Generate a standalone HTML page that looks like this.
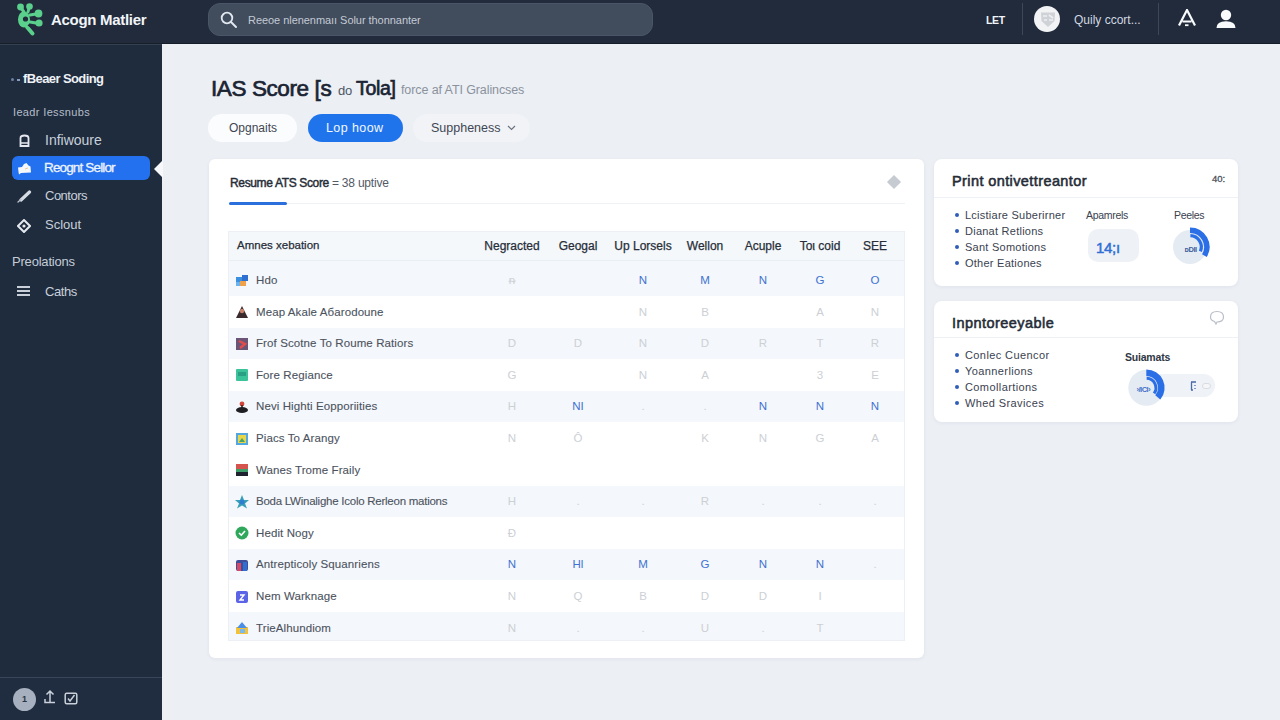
<!DOCTYPE html>
<html><head><meta charset="utf-8">
<style>
*{margin:0;padding:0;box-sizing:border-box}
html,body{width:1280px;height:720px;overflow:hidden}
body{font-family:"Liberation Sans",sans-serif;background:#eceff4;position:relative;color:#1f2937}
.abs{position:absolute}
#top{left:0;top:0;width:1280px;height:44px;background:#212b3b;border-bottom:1px solid #161e2a}
#side{left:0;top:44px;width:162px;height:676px;background:#1f2c3e;border-top:1px solid #34404f}
.t{position:absolute;white-space:nowrap;line-height:1}
</style></head><body>
<div id="top" class="abs">
  <!-- logo -->
  <svg class="abs" style="left:0;top:0" width="50" height="44" viewBox="0 0 50 44">
    <g fill="#5ad08c" stroke="#5ad08c" stroke-linecap="round" stroke-linejoin="round">
      <circle cx="20.5" cy="7" r="3.4" stroke="none"/><circle cx="29.5" cy="6.5" r="3.3" stroke="none"/>
      <circle cx="38.5" cy="13.5" r="3.9" stroke="none"/><circle cx="39" cy="23" r="3.6" stroke="none"/>
      <ellipse cx="24" cy="19.5" rx="6" ry="8" stroke="none"/>
      <path d="M27 27 L32.5 33.5" fill="none" stroke-width="4"/>
      <path d="M21 8 L24 12 M29 8 L28 12 M30 15 L36 14 M30 22 L36 23" fill="none" stroke-width="3"/>
    </g>
    <circle cx="25.5" cy="19" r="2.6" fill="#212b3b"/>
    <path d="M28 25 L31 27" stroke="#212b3b" stroke-width="1.5"/>
  </svg>
  <div class="t" style="left:51px;top:12px;font-size:15px;font-weight:bold;color:#f1f5f9;letter-spacing:-0.3px">Acogn Matlier</div>
  <!-- search -->
  <div class="abs" style="left:208px;top:3px;width:445px;height:33px;border-radius:12px;background:#414c5d;border:1px solid #4a5567"></div>
  <svg class="abs" style="left:220px;top:11px" width="18" height="18" viewBox="0 0 18 18"><circle cx="7" cy="7" r="5.3" fill="none" stroke="#e2e8f0" stroke-width="1.8"/><path d="M11 11 L16 16" stroke="#e2e8f0" stroke-width="2" stroke-linecap="round"/></svg>
  <div class="t" style="left:248px;top:15px;font-size:11px;color:#c3cad4;letter-spacing:-0.05px">Reeoe nlenenmaıı Solur thonnanter</div>
  <!-- right -->
  <div class="t" style="left:986px;top:15px;font-size:10.5px;font-weight:bold;color:#f1f5f9;letter-spacing:-0.3px">LET</div>
  <div class="abs" style="left:1022px;top:3px;width:1px;height:32px;background:#3c4858"></div>
  <div class="abs" style="left:1034px;top:6px;width:26px;height:26px;border-radius:50%;background:#f2f3f5"></div>
  <svg class="abs" style="left:1040px;top:11px" width="16" height="17" viewBox="0 0 16 17"><path d="M1 1.5 L15 1.5 L14.5 10 L8 16 L1.5 10 Z" fill="#cfd2d7"/><path d="M3 5h4M9 4l4 3M4 9h3M9 9h4" stroke="#eef0f2" stroke-width="1.6"/></svg>
  <div class="t" style="left:1074px;top:14px;font-size:12px;color:#d1d8e2">Quily ccort...</div>
  <div class="abs" style="left:1158px;top:3px;width:1px;height:32px;background:#3c4858"></div>
  <svg class="abs" style="left:1177px;top:9px" width="20" height="19" viewBox="0 0 20 19"><path d="M2 16.5 L10 1 L18 16.5 M5.5 12.5 L14.5 12.5" fill="none" stroke="#f8fafc" stroke-width="2.2"/><path d="M8 16.2 L11.5 16.2" stroke="#f8fafc" stroke-width="1.8"/></svg>
  <svg class="abs" style="left:1215px;top:9px" width="22" height="20" viewBox="0 0 22 20"><circle cx="11" cy="6" r="5.2" fill="#f8fafc"/><path d="M1.5 19 Q1.5 12.2 11 12.2 Q20.5 12.2 20.5 19 Z" fill="#f8fafc"/></svg>
</div>

<div id="side" class="abs">
  <div class="abs" style="left:11px;top:33px;width:3px;height:3px;border-radius:50%;background:#6b7fa8"></div>
  <div class="abs" style="left:17px;top:34px;width:3px;height:2px;background:#8a9bbd"></div>
  <div class="t" style="left:23px;top:27px;font-size:13px;font-weight:bold;color:#eef2f7;letter-spacing:-0.6px">fBeaer Soding</div>
  <div class="t" style="left:13px;top:62px;font-size:11px;color:#b5bdc9;letter-spacing:0.35px">Ieadr Iessnubs</div>
  <!-- item 1 -->
  <svg class="abs" style="left:18px;top:89px" width="13" height="13" viewBox="0 0 13 13"><path d="M2.5 12 L2.5 4 Q2.5 1.5 6.5 1.5 Q10.5 1.5 10.5 4 L10.5 12 Z" fill="none" stroke="#e5e9ef" stroke-width="1.8"/><path d="M3 9h7" stroke="#e5e9ef" stroke-width="1.5"/></svg>
  <div class="t" style="left:45px;top:88px;font-size:14px;color:#c8d0da">Infiwoure</div>
  <!-- active -->
  <div class="abs" style="left:12px;top:111px;width:138px;height:24px;border-radius:6px;background:#2371ee"></div>
  <svg class="abs" style="left:17px;top:117px" width="15" height="13" viewBox="0 0 15 13"><path d="M1 5.5 L5 5 L7 2 L9.5 1 L11.5 3.5 L13.5 4.5 L14 10.5 L4 11 L2 12.5 L1.5 10 Z" fill="#f4f7fb"/><path d="M8 7 L11 6" stroke="#f3c98a" stroke-width="1"/></svg>
  <div class="t" style="left:44px;top:116px;font-size:13.5px;color:#eef4ff;letter-spacing:-0.85px;-webkit-text-stroke:0.3px #eef4ff">Reognt Sellor</div>
  <svg class="abs" style="left:153px;top:115px" width="10" height="18" viewBox="0 0 10 18"><path d="M10 0 L1 9 L10 18 Z" fill="#f6f8fa"/></svg>
  <!-- item 3 -->
  <svg class="abs" style="left:17px;top:145px" width="15" height="13" viewBox="0 0 15 13"><path d="M4 10 L12.5 2" stroke="#d5dbe3" stroke-width="3.2" stroke-linecap="round"/><path d="M1 12 L4 9.5" stroke="#b9c1cc" stroke-width="1.4" stroke-linecap="round"/></svg>
  <div class="t" style="left:45px;top:144px;font-size:13px;color:#c8d0da;letter-spacing:-0.5px">Contors</div>
  <!-- item 4 -->
  <svg class="abs" style="left:17px;top:174px" width="14" height="14" viewBox="0 0 14 14"><path d="M7 1 L13 7 L7 13 L1 7 Z" fill="none" stroke="#e5e9ef" stroke-width="2"/><circle cx="7" cy="7" r="1.6" fill="#e5e9ef"/></svg>
  <div class="t" style="left:45px;top:173px;font-size:13px;color:#c8d0da">Sclout</div>
  <div class="t" style="left:12px;top:210px;font-size:13px;color:#c4ccd6;letter-spacing:-0.2px">Preolations</div>
  <svg class="abs" style="left:16px;top:240px" width="15" height="12" viewBox="0 0 15 12"><path d="M1 2h13M1 6h13M1 10h13" stroke="#c9d0da" stroke-width="1.8"/></svg>
  <div class="t" style="left:45px;top:240px;font-size:13px;color:#c8d0da;letter-spacing:-0.4px">Caths</div>
  <!-- bottom -->
  <div class="abs" style="left:0;top:632px;width:162px;height:44px;background:#202d40;border-top:1px solid #38455a"></div>
  <div class="abs" style="left:13px;top:643px;width:23px;height:23px;border-radius:50%;background:#a6b0be"></div>
  <div class="t" style="left:22px;top:650px;font-size:9px;color:#2c3443;font-weight:bold">1</div>
  <svg class="abs" style="left:43px;top:644px" width="14" height="15" viewBox="0 0 14 15"><path d="M7 13 L7 2 M3.5 5.5 L7 2 L10.5 5.5 M2 10 L2 13.5 L12 13.5" fill="none" stroke="#c9d0da" stroke-width="1.5"/></svg>
  <svg class="abs" style="left:64px;top:647px" width="14" height="13" viewBox="0 0 14 13"><rect x="1.2" y="1.2" width="11.6" height="10.6" rx="1.5" fill="none" stroke="#c9d0da" stroke-width="1.5"/><path d="M4 6.5 L6 9 L10.5 3" fill="none" stroke="#c9d0da" stroke-width="1.5"/></svg>
</div>

<div id="main">
<div class="t" style="left:211px;top:78px;font-size:22.5px;font-weight:normal;color:#1b2433;letter-spacing:-0.4px;-webkit-text-stroke:0.7px #1b2433">IAS Score [s</div>
<div class="t" style="left:338px;top:84px;font-size:13px;color:#4b5563;letter-spacing:-0.3px">do</div>
<div class="t" style="left:356px;top:79px;font-size:19.5px;font-weight:normal;color:#1b2433;letter-spacing:-0.3px;-webkit-text-stroke:0.7px #1b2433">Tola]</div>
<div class="t" style="left:401px;top:84px;font-size:12.5px;color:#8a929e;letter-spacing:-0.1px">force af ATI Gralincses</div>
<div class="abs" style="left:208px;top:114px;width:89px;height:28px;border-radius:14px;background:#fbfcfd"></div>
<div class="t" style="left:229px;top:122px;font-size:12px;color:#3f4753">Opgnaits</div>
<div class="abs" style="left:308px;top:114px;width:95px;height:28px;border-radius:14px;background:#1f74ec"></div>
<div class="t" style="left:326px;top:122px;font-size:12.5px;color:#f4f8ff;letter-spacing:0.4px">Lop hoow</div>
<div class="abs" style="left:413px;top:114px;width:117px;height:28px;border-radius:14px;background:#f1f3f6"></div>
<div class="t" style="left:431px;top:122px;font-size:12.5px;color:#3f4753;letter-spacing:0px">Suppheness</div>
<svg class="abs" style="left:507px;top:125px" width="9" height="6" viewBox="0 0 9 6"><path d="M1 1 L4.5 4.5 L8 1" fill="none" stroke="#6b7280" stroke-width="1.2"/></svg>
<div class="abs" style="left:209px;top:159px;width:715px;height:499px;border-radius:6px;background:#ffffff;box-shadow:0 1px 4px rgba(30,40,60,0.06)"></div>
<div class="t" style="left:230px;top:177px;font-size:12px;font-weight:normal;color:#262d38;letter-spacing:-0.35px;-webkit-text-stroke:0.45px #262d38">Resume ATS Score <span style="-webkit-text-stroke:0;color:#525a66;letter-spacing:-0.2px">= 38 uptive</span></div>
<div class="abs" style="left:229px;top:203px;width:676px;height:1px;background:#eef1f5"></div>
<div class="abs" style="left:229px;top:202px;width:58px;height:2.5px;border-radius:2px;background:#2b6fdc"></div>
<div class="abs" style="left:889px;top:177px;width:10px;height:10px;background:#c6cbd2;transform:rotate(45deg)"></div>
<div class="abs" style="left:228px;top:231px;width:677px;height:410px;border:1px solid #eceff4;background:#fff"></div>
<div class="abs" style="left:229px;top:232px;width:675px;height:29px;background:#f5f8fb;border-bottom:1px solid #e9eef4"></div>
<div class="t" style="left:237px;top:240px;font-size:11.5px;color:#272e39;letter-spacing:0px;-webkit-text-stroke:0.25px #272e39">Amnes xebation</div>
<div class="t" style="left:452px;width:120px;text-align:center;top:240px;font-size:12px;color:#272e39;letter-spacing:0px;-webkit-text-stroke:0.25px #272e39">Negracted</div>
<div class="t" style="left:518px;width:120px;text-align:center;top:240px;font-size:12px;color:#272e39;letter-spacing:0px;-webkit-text-stroke:0.25px #272e39">Geogal</div>
<div class="t" style="left:583px;width:120px;text-align:center;top:240px;font-size:12px;color:#272e39;letter-spacing:0px;-webkit-text-stroke:0.25px #272e39">Up Lorsels</div>
<div class="t" style="left:645px;width:120px;text-align:center;top:240px;font-size:12px;color:#272e39;letter-spacing:0px;-webkit-text-stroke:0.25px #272e39">Wellon</div>
<div class="t" style="left:703px;width:120px;text-align:center;top:240px;font-size:12px;color:#272e39;letter-spacing:0px;-webkit-text-stroke:0.25px #272e39">Acuple</div>
<div class="t" style="left:760px;width:120px;text-align:center;top:240px;font-size:12px;color:#272e39;letter-spacing:0px;-webkit-text-stroke:0.25px #272e39">Toι coid</div>
<div class="t" style="left:815px;width:120px;text-align:center;top:240px;font-size:12px;color:#272e39;letter-spacing:0px;-webkit-text-stroke:0.25px #272e39">SEE</div>
<div class="abs" style="left:229px;top:261.0px;width:675px;height:35.1px;background:#f4f7fb"></div>
<svg class="abs" style="left:235px;top:273.5px" width="14" height="14" viewBox="0 0 14 14"><rect x="1" y="3" width="6" height="5" fill="#3b8fe0"/><rect x="7" y="1" width="6" height="6" fill="#2f6fcf"/><rect x="5" y="7" width="6" height="5" fill="#f0a24a"/><rect x="1" y="8" width="4" height="4" fill="#6bb2f0"/></svg>
<div class="t" style="left:256px;top:275.0px;font-size:11.5px;color:#4c535e;letter-spacing:0.1px;-webkit-text-stroke:0.1px #4c535e">Hdo</div>
<div class="t" style="left:492px;width:40px;text-align:center;top:275.0px;font-size:11.5px;color:#ccd0d5">ᵰ</div>
<div class="t" style="left:623px;width:40px;text-align:center;top:275.0px;font-size:11.5px;color:#3f72d2">N</div>
<div class="t" style="left:685px;width:40px;text-align:center;top:275.0px;font-size:11.5px;color:#3f72d2">M</div>
<div class="t" style="left:743px;width:40px;text-align:center;top:275.0px;font-size:11.5px;color:#3f72d2">N</div>
<div class="t" style="left:800px;width:40px;text-align:center;top:275.0px;font-size:11.5px;color:#3f72d2">G</div>
<div class="t" style="left:855px;width:40px;text-align:center;top:275.0px;font-size:11.5px;color:#3f72d2">O</div>
<svg class="abs" style="left:235px;top:305.1px" width="14" height="14" viewBox="0 0 14 14"><path d="M7 1 L13 13 L1 13 Z" fill="#3a2a2e"/><circle cx="7" cy="6" r="2.2" fill="#c9826b"/></svg>
<div class="t" style="left:256px;top:306.6px;font-size:11.5px;color:#4c535e;letter-spacing:0.1px;-webkit-text-stroke:0.1px #4c535e">Meap Akale Aбarodoune</div>
<div class="t" style="left:623px;width:40px;text-align:center;top:306.6px;font-size:11.5px;color:#ccd0d5">N</div>
<div class="t" style="left:685px;width:40px;text-align:center;top:306.6px;font-size:11.5px;color:#ccd0d5">B</div>
<div class="t" style="left:800px;width:40px;text-align:center;top:306.6px;font-size:11.5px;color:#ccd0d5">A</div>
<div class="t" style="left:855px;width:40px;text-align:center;top:306.6px;font-size:11.5px;color:#ccd0d5">N</div>
<div class="abs" style="left:229px;top:327.7px;width:675px;height:31.6px;background:#f4f7fb"></div>
<svg class="abs" style="left:235px;top:336.7px" width="14" height="14" viewBox="0 0 14 14"><rect x="1" y="1" width="12" height="12" fill="#6b5576"/><path d="M4 4 L10 7 L5 11" stroke="#e24b4b" stroke-width="2.5" fill="none"/></svg>
<div class="t" style="left:256px;top:338.2px;font-size:11.5px;color:#4c535e;letter-spacing:0.1px;-webkit-text-stroke:0.1px #4c535e">Frof Scotne To Roume Ratiors</div>
<div class="t" style="left:492px;width:40px;text-align:center;top:338.2px;font-size:11.5px;color:#ccd0d5">D</div>
<div class="t" style="left:558px;width:40px;text-align:center;top:338.2px;font-size:11.5px;color:#ccd0d5">D</div>
<div class="t" style="left:623px;width:40px;text-align:center;top:338.2px;font-size:11.5px;color:#ccd0d5">N</div>
<div class="t" style="left:685px;width:40px;text-align:center;top:338.2px;font-size:11.5px;color:#ccd0d5">D</div>
<div class="t" style="left:743px;width:40px;text-align:center;top:338.2px;font-size:11.5px;color:#ccd0d5">R</div>
<div class="t" style="left:800px;width:40px;text-align:center;top:338.2px;font-size:11.5px;color:#ccd0d5">T</div>
<div class="t" style="left:855px;width:40px;text-align:center;top:338.2px;font-size:11.5px;color:#ccd0d5">R</div>
<svg class="abs" style="left:235px;top:368.3px" width="14" height="14" viewBox="0 0 14 14"><rect x="1" y="1" width="12" height="12" rx="1" fill="#3cc39a"/><rect x="3" y="4" width="8" height="4" fill="#2a9f83"/></svg>
<div class="t" style="left:256px;top:369.8px;font-size:11.5px;color:#4c535e;letter-spacing:0.1px;-webkit-text-stroke:0.1px #4c535e">Fore Regiance</div>
<div class="t" style="left:492px;width:40px;text-align:center;top:369.8px;font-size:11.5px;color:#ccd0d5">G</div>
<div class="t" style="left:623px;width:40px;text-align:center;top:369.8px;font-size:11.5px;color:#ccd0d5">N</div>
<div class="t" style="left:685px;width:40px;text-align:center;top:369.8px;font-size:11.5px;color:#ccd0d5">A</div>
<div class="t" style="left:800px;width:40px;text-align:center;top:369.8px;font-size:11.5px;color:#ccd0d5">3</div>
<div class="t" style="left:855px;width:40px;text-align:center;top:369.8px;font-size:11.5px;color:#ccd0d5">E</div>
<div class="abs" style="left:229px;top:390.9px;width:675px;height:31.6px;background:#f4f7fb"></div>
<svg class="abs" style="left:235px;top:399.9px" width="14" height="14" viewBox="0 0 14 14"><ellipse cx="7" cy="10" rx="6" ry="3" fill="#1f1f23"/><circle cx="7" cy="4" r="2.4" fill="#d2463c"/><rect x="6.3" y="5" width="1.4" height="4" fill="#1f1f23"/></svg>
<div class="t" style="left:256px;top:401.4px;font-size:11.5px;color:#4c535e;letter-spacing:0.1px;-webkit-text-stroke:0.1px #4c535e">Nevi Highti Eopporiities</div>
<div class="t" style="left:492px;width:40px;text-align:center;top:401.4px;font-size:11.5px;color:#ccd0d5">H</div>
<div class="t" style="left:558px;width:40px;text-align:center;top:401.4px;font-size:11.5px;color:#3f72d2">NI</div>
<div class="t" style="left:623px;width:40px;text-align:center;top:401.4px;font-size:11.5px;color:#ccd0d5">.</div>
<div class="t" style="left:685px;width:40px;text-align:center;top:401.4px;font-size:11.5px;color:#ccd0d5">.</div>
<div class="t" style="left:743px;width:40px;text-align:center;top:401.4px;font-size:11.5px;color:#3f72d2">N</div>
<div class="t" style="left:800px;width:40px;text-align:center;top:401.4px;font-size:11.5px;color:#3f72d2">N</div>
<div class="t" style="left:855px;width:40px;text-align:center;top:401.4px;font-size:11.5px;color:#3f72d2">N</div>
<svg class="abs" style="left:235px;top:431.5px" width="14" height="14" viewBox="0 0 14 14"><rect x="1" y="1" width="12" height="12" fill="#52a7e0"/><rect x="3" y="3" width="8" height="8" fill="#e8d64a"/><path d="M4 10 L7 6 L10 10Z" fill="#46a36b"/></svg>
<div class="t" style="left:256px;top:433.0px;font-size:11.5px;color:#4c535e;letter-spacing:0.1px;-webkit-text-stroke:0.1px #4c535e">Piacs To Arangy</div>
<div class="t" style="left:492px;width:40px;text-align:center;top:433.0px;font-size:11.5px;color:#ccd0d5">N</div>
<div class="t" style="left:558px;width:40px;text-align:center;top:433.0px;font-size:11.5px;color:#ccd0d5">Ô</div>
<div class="t" style="left:685px;width:40px;text-align:center;top:433.0px;font-size:11.5px;color:#ccd0d5">K</div>
<div class="t" style="left:743px;width:40px;text-align:center;top:433.0px;font-size:11.5px;color:#ccd0d5">N</div>
<div class="t" style="left:800px;width:40px;text-align:center;top:433.0px;font-size:11.5px;color:#ccd0d5">G</div>
<div class="t" style="left:855px;width:40px;text-align:center;top:433.0px;font-size:11.5px;color:#ccd0d5">A</div>
<svg class="abs" style="left:235px;top:463.1px" width="14" height="14" viewBox="0 0 14 14"><rect x="1" y="1" width="12" height="5" fill="#d6544e"/><rect x="1" y="6" width="12" height="3" fill="#3d9e6a"/><rect x="1" y="9" width="12" height="4" fill="#1f2330"/></svg>
<div class="t" style="left:256px;top:464.6px;font-size:11.5px;color:#4c535e;letter-spacing:0.1px;-webkit-text-stroke:0.1px #4c535e">Wanes Trome Fraily</div>
<div class="abs" style="left:229px;top:485.7px;width:675px;height:31.6px;background:#f4f7fb"></div>
<svg class="abs" style="left:235px;top:494.7px" width="14" height="14" viewBox="0 0 14 14"><path d="M7 0 L9 5 L14 5 L10 8.5 L12 13.5 L7 10.5 L2 13.5 L4 8.5 L0 5 L5 5Z" fill="#3aa0b8"/><circle cx="7" cy="7" r="2.5" fill="#2f7fd0"/></svg>
<div class="t" style="left:256px;top:496.2px;font-size:11.5px;color:#4c535e;letter-spacing:-0.25px;-webkit-text-stroke:0.1px #4c535e">Boda LWinalighe Icolo Rerleon mations</div>
<div class="t" style="left:492px;width:40px;text-align:center;top:496.2px;font-size:11.5px;color:#ccd0d5">H</div>
<div class="t" style="left:558px;width:40px;text-align:center;top:496.2px;font-size:11.5px;color:#ccd0d5">.</div>
<div class="t" style="left:623px;width:40px;text-align:center;top:496.2px;font-size:11.5px;color:#ccd0d5">.</div>
<div class="t" style="left:685px;width:40px;text-align:center;top:496.2px;font-size:11.5px;color:#ccd0d5">R</div>
<div class="t" style="left:743px;width:40px;text-align:center;top:496.2px;font-size:11.5px;color:#ccd0d5">.</div>
<div class="t" style="left:800px;width:40px;text-align:center;top:496.2px;font-size:11.5px;color:#ccd0d5">.</div>
<div class="t" style="left:855px;width:40px;text-align:center;top:496.2px;font-size:11.5px;color:#ccd0d5">.</div>
<svg class="abs" style="left:235px;top:526.3px" width="14" height="14" viewBox="0 0 14 14"><circle cx="7" cy="7" r="6.5" fill="#2fa85c"/><path d="M4 7 L6.3 9.2 L10 5" stroke="#fff" stroke-width="1.6" fill="none"/></svg>
<div class="t" style="left:256px;top:527.8px;font-size:11.5px;color:#4c535e;letter-spacing:0.1px;-webkit-text-stroke:0.1px #4c535e">Hedit Nogy</div>
<div class="t" style="left:492px;width:40px;text-align:center;top:527.8px;font-size:11.5px;color:#ccd0d5">Ð</div>
<div class="abs" style="left:229px;top:548.9px;width:675px;height:31.6px;background:#f4f7fb"></div>
<svg class="abs" style="left:235px;top:557.9px" width="14" height="14" viewBox="0 0 14 14"><rect x="1" y="2" width="12" height="11" rx="2" fill="#3d4f9a"/><rect x="2" y="5" width="4" height="8" fill="#d84a63"/><rect x="8" y="4" width="4" height="9" fill="#2f6fd0"/></svg>
<div class="t" style="left:256px;top:559.4px;font-size:11.5px;color:#4c535e;letter-spacing:0.1px;-webkit-text-stroke:0.1px #4c535e">Antrepticoly Squanriens</div>
<div class="t" style="left:492px;width:40px;text-align:center;top:559.4px;font-size:11.5px;color:#3f72d2">N</div>
<div class="t" style="left:558px;width:40px;text-align:center;top:559.4px;font-size:11.5px;color:#3f72d2">Hl</div>
<div class="t" style="left:623px;width:40px;text-align:center;top:559.4px;font-size:11.5px;color:#3f72d2">M</div>
<div class="t" style="left:685px;width:40px;text-align:center;top:559.4px;font-size:11.5px;color:#3f72d2">G</div>
<div class="t" style="left:743px;width:40px;text-align:center;top:559.4px;font-size:11.5px;color:#3f72d2">N</div>
<div class="t" style="left:800px;width:40px;text-align:center;top:559.4px;font-size:11.5px;color:#3f72d2">N</div>
<div class="t" style="left:855px;width:40px;text-align:center;top:559.4px;font-size:11.5px;color:#ccd0d5">.</div>
<svg class="abs" style="left:235px;top:589.5px" width="14" height="14" viewBox="0 0 14 14"><rect x="1" y="1" width="12" height="12" rx="2" fill="#5b63e6"/><path d="M5 5h4L5 10h4" stroke="#fff" stroke-width="1.4" fill="none"/></svg>
<div class="t" style="left:256px;top:591.0px;font-size:11.5px;color:#4c535e;letter-spacing:0.1px;-webkit-text-stroke:0.1px #4c535e">Nem Warknage</div>
<div class="t" style="left:492px;width:40px;text-align:center;top:591.0px;font-size:11.5px;color:#ccd0d5">N</div>
<div class="t" style="left:558px;width:40px;text-align:center;top:591.0px;font-size:11.5px;color:#ccd0d5">Q</div>
<div class="t" style="left:623px;width:40px;text-align:center;top:591.0px;font-size:11.5px;color:#ccd0d5">B</div>
<div class="t" style="left:685px;width:40px;text-align:center;top:591.0px;font-size:11.5px;color:#ccd0d5">D</div>
<div class="t" style="left:743px;width:40px;text-align:center;top:591.0px;font-size:11.5px;color:#ccd0d5">D</div>
<div class="t" style="left:800px;width:40px;text-align:center;top:591.0px;font-size:11.5px;color:#ccd0d5">I</div>
<div class="abs" style="left:229px;top:612.1px;width:675px;height:27.9px;background:#f4f7fb"></div>
<svg class="abs" style="left:235px;top:621.1px" width="14" height="14" viewBox="0 0 14 14"><rect x="1" y="6" width="12" height="7" fill="#f2c23a"/><path d="M2 7 L7 1 L12 7Z" fill="#4a8ee8"/><rect x="5" y="8" width="5" height="4" fill="#7ab8f0"/></svg>
<div class="t" style="left:256px;top:622.6px;font-size:11.5px;color:#4c535e;letter-spacing:0.1px;-webkit-text-stroke:0.1px #4c535e">TrieAlhundiom</div>
<div class="t" style="left:492px;width:40px;text-align:center;top:622.6px;font-size:11.5px;color:#ccd0d5">N</div>
<div class="t" style="left:558px;width:40px;text-align:center;top:622.6px;font-size:11.5px;color:#ccd0d5">.</div>
<div class="t" style="left:623px;width:40px;text-align:center;top:622.6px;font-size:11.5px;color:#ccd0d5">.</div>
<div class="t" style="left:685px;width:40px;text-align:center;top:622.6px;font-size:11.5px;color:#ccd0d5">U</div>
<div class="t" style="left:743px;width:40px;text-align:center;top:622.6px;font-size:11.5px;color:#ccd0d5">.</div>
<div class="t" style="left:800px;width:40px;text-align:center;top:622.6px;font-size:11.5px;color:#ccd0d5">T</div>
<div class="abs" style="left:934px;top:159px;width:304px;height:127px;border-radius:8px;background:#fff;box-shadow:0 1px 4px rgba(30,40,60,0.06)"></div>
<div class="t" style="left:952px;top:174px;font-size:14.5px;font-weight:normal;color:#252c37;letter-spacing:0.4px;-webkit-text-stroke:0.55px #252c37">Print ontivettreantor</div>
<div class="t" style="left:1212px;top:174px;font-size:9.5px;color:#4b525c;-webkit-text-stroke:0.3px #4b525c">40:</div>
<div class="abs" style="left:934px;top:197px;width:304px;height:1px;background:#eef1f5"></div>
<div class="abs" style="left:955px;top:213px;width:4px;height:4px;border-radius:50%;background:#2f5fb8"></div>
<div class="t" style="left:965px;top:210px;font-size:11px;color:#3a4250;letter-spacing:0.25px">Lcistiare Suberirner</div>
<div class="abs" style="left:955px;top:229px;width:4px;height:4px;border-radius:50%;background:#2f5fb8"></div>
<div class="t" style="left:965px;top:226px;font-size:11px;color:#3a4250;letter-spacing:0.25px">Dianat Retlions</div>
<div class="abs" style="left:955px;top:245px;width:4px;height:4px;border-radius:50%;background:#2f5fb8"></div>
<div class="t" style="left:965px;top:242px;font-size:11px;color:#3a4250;letter-spacing:0.25px">Sant Somotions</div>
<div class="abs" style="left:955px;top:261px;width:4px;height:4px;border-radius:50%;background:#2f5fb8"></div>
<div class="t" style="left:965px;top:258px;font-size:11px;color:#3a4250;letter-spacing:0.25px">Other Eationes</div>
<div class="t" style="left:1086px;top:210px;font-size:10.5px;color:#3a4250;letter-spacing:-0.3px">Apamrels</div>
<div class="abs" style="left:1088px;top:229px;width:51px;height:33px;border-radius:10px;background:#eef2f7"></div>
<div class="t" style="left:1096px;top:240px;font-size:15px;font-weight:normal;color:#2f6fd6;letter-spacing:-0.3px;-webkit-text-stroke:0.5px #2f6fd6">14;ı</div>
<div class="t" style="left:1174px;top:210px;font-size:10.5px;color:#3a4250;letter-spacing:-0.3px">Peeles</div>
<svg class="abs" style="left:1160px;top:220px" width="60" height="55" viewBox="0 0 60 55"><circle cx="30" cy="27" r="17" fill="#e5ebf3"/><path d="M30.00 10.20 A16.8 16.8 0 0 1 44.40 35.65" fill="none" stroke="#2b6fe6" stroke-width="5.5"/><path d="M30.39 15.71 A11.3 11.3 0 0 1 40.40 31.42" fill="none" stroke="#2b6fe6" stroke-width="3.2"/><text x="24.5" y="32" font-size="7.5" font-weight="bold" fill="#40609e" font-family="Liberation Sans" letter-spacing="-0.4">ᴅDll</text></svg>
<div class="abs" style="left:934px;top:301px;width:304px;height:121px;border-radius:8px;background:#fff;box-shadow:0 1px 4px rgba(30,40,60,0.06)"></div>
<div class="t" style="left:952px;top:316px;font-size:14.5px;font-weight:normal;color:#252c37;letter-spacing:0.45px;-webkit-text-stroke:0.55px #252c37">Inpntoreeyable</div>
<svg class="abs" style="left:1209px;top:310px" width="16" height="15" viewBox="0 0 16 15"><path d="M8 1.5 Q14.5 1.5 14.5 7 Q14.5 12 8 12 L7 14 L5.5 11.5 Q1.5 10.5 1.5 7 Q1.5 1.5 8 1.5Z" fill="none" stroke="#b9bec6" stroke-width="1.2"/></svg>
<div class="abs" style="left:934px;top:337px;width:304px;height:1px;background:#eef1f5"></div>
<div class="abs" style="left:955px;top:353px;width:4px;height:4px;border-radius:50%;background:#2f5fb8"></div>
<div class="t" style="left:965px;top:350px;font-size:11px;color:#3a4250;letter-spacing:0.4px">Conlec Cuencor</div>
<div class="abs" style="left:955px;top:369px;width:4px;height:4px;border-radius:50%;background:#2f5fb8"></div>
<div class="t" style="left:965px;top:366px;font-size:11px;color:#3a4250;letter-spacing:0.4px">Yoannerlions</div>
<div class="abs" style="left:955px;top:385px;width:4px;height:4px;border-radius:50%;background:#2f5fb8"></div>
<div class="t" style="left:965px;top:382px;font-size:11px;color:#3a4250;letter-spacing:0.4px">Comollartions</div>
<div class="abs" style="left:955px;top:401px;width:4px;height:4px;border-radius:50%;background:#2f5fb8"></div>
<div class="t" style="left:965px;top:398px;font-size:11px;color:#3a4250;letter-spacing:0.4px">Whed Sravices</div>
<div class="t" style="left:1125px;top:352px;font-size:10.5px;font-weight:bold;color:#2f3744;letter-spacing:-0.2px">Suiamats</div>
<div class="abs" style="left:1150px;top:374px;width:65px;height:23px;border-radius:12px;background:#eff2f6"></div>
<svg class="abs" style="left:1120px;top:360px" width="60" height="55" viewBox="0 0 60 55"><circle cx="26.3" cy="27.8" r="18" fill="#e5ebf3"/><path d="M26.30 12.80 A15 15 0 0 1 37.79 37.44" fill="none" stroke="#2b6fe6" stroke-width="6.6"/><path d="M26.64 18.21 A9.6 9.6 0 0 1 34.07 33.44" fill="none" stroke="#2b6fe6" stroke-width="3"/><text x="16.5" y="32.3" font-size="7.5" font-weight="bold" fill="#3f6fc8" font-family="Liberation Sans" letter-spacing="-0.5">›/ICl›</text></svg>
<svg class="abs" style="left:1190px;top:381px" width="8" height="10" viewBox="0 0 8 10"><path d="M1 1h5M1.5 1v8M1 9h2M5 4v1M5 7v1" stroke="#4b6aa8" stroke-width="1.3"/></svg>
<div class="abs" style="left:1202px;top:383px;width:9px;height:6px;border-radius:3px;border:1.2px solid #d9dde3;background:#f5f6f8"></div>
</div>
</body></html>
